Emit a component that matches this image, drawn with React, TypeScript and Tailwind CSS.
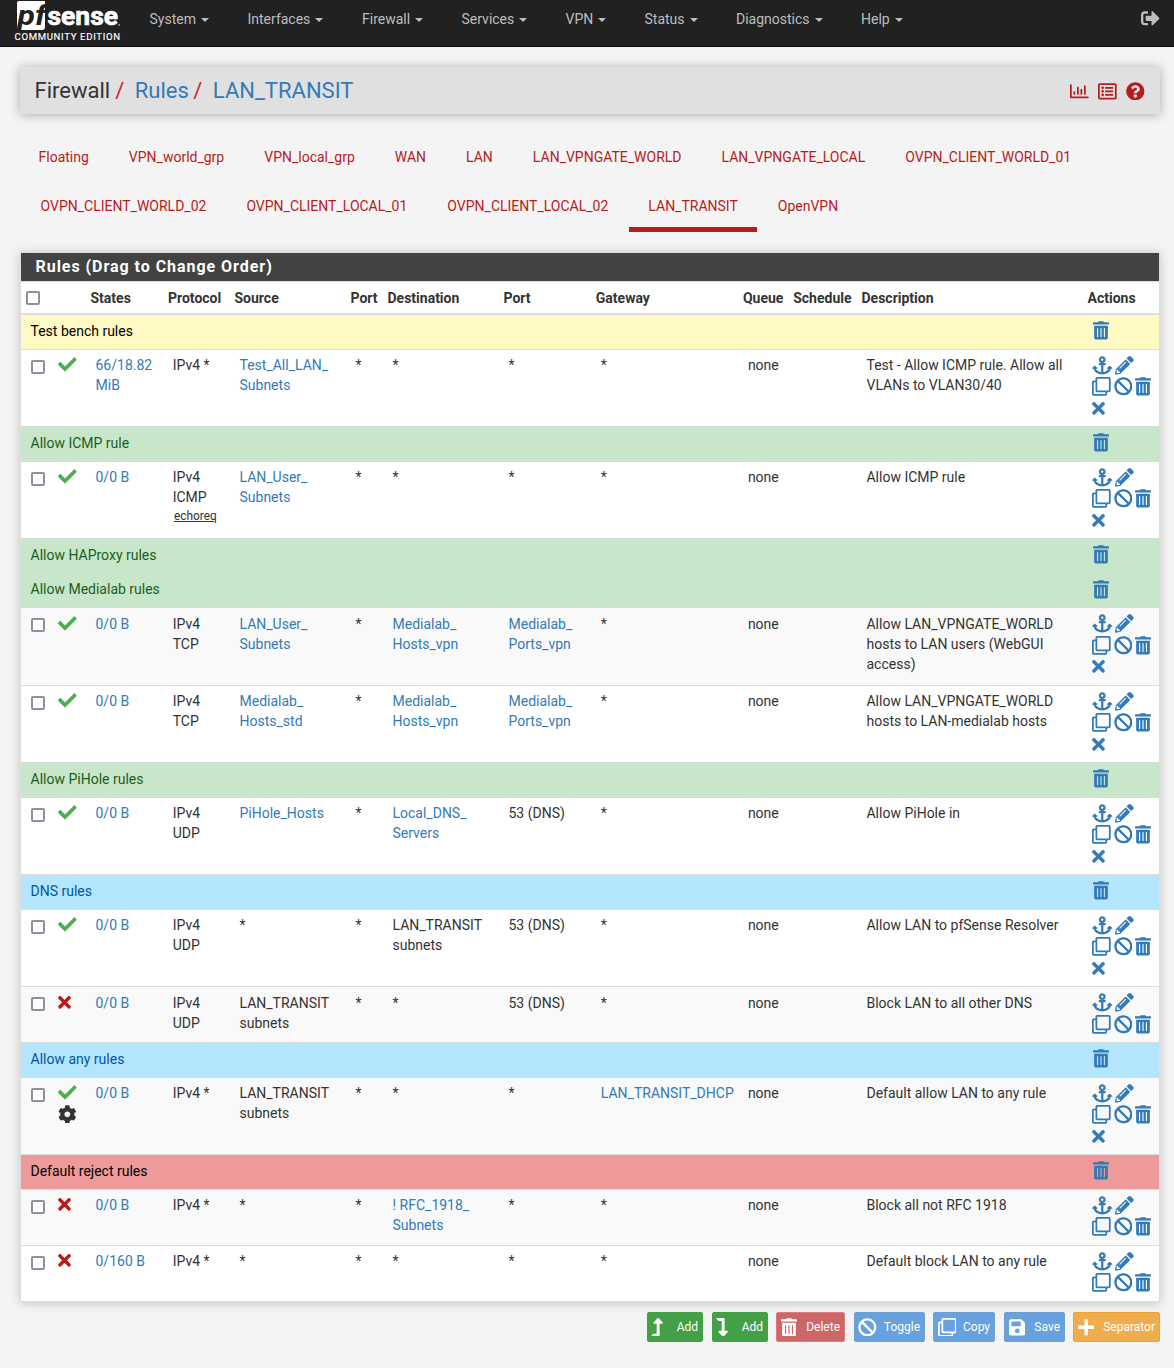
import React from "react";
import {
  FaAnchor,
  FaBan,
  FaCheck,
  FaCog,
  FaLevelDownAlt,
  FaLevelUpAlt,
  FaPencilAlt,
  FaPlus,
  FaQuestionCircle,
  FaRegChartBar,
  FaRegClone,
  FaRegListAlt,
  FaSave,
  FaSignOutAlt,
  FaTimes,
  FaTrashAlt,
} from "react-icons/fa";

const NAV = [
  { label: "System", w: "w-[98px]" },
  { label: "Interfaces", w: "w-[114.5px]" },
  { label: "Firewall", w: "w-[99.5px]" },
  { label: "Services", w: "w-[104px]" },
  { label: "VPN", w: "w-[79px]" },
  { label: "Status", w: "w-[91.5px]" },
  { label: "Diagnostics", w: "w-[125px]" },
  { label: "Help", w: "w-[60px]" },
];

const TABS_TOP = [
  "Floating",
  "VPN_world_grp",
  "VPN_local_grp",
  "WAN",
  "LAN",
  "LAN_VPNGATE_WORLD",
  "LAN_VPNGATE_LOCAL",
  "OVPN_CLIENT_WORLD_01",
];
const TABS_BOTTOM = [
  "OVPN_CLIENT_WORLD_02",
  "OVPN_CLIENT_LOCAL_01",
  "OVPN_CLIENT_LOCAL_02",
  "LAN_TRANSIT",
  "OpenVPN",
];

const COLS =
  "grid grid-cols-[32.5px_32px_77.5px_66.5px_116px_37px_116px_92.3px_147.1px_50.3px_68.3px_226px_1fr]";

type Cell = string | { link: string };
type Sep = { kind: "sep"; text: string; cls: string; size: string; iconCls?: string };
type Rule = {
  kind: "rule";
  size: string;
  raised?: boolean;
  block?: boolean;
  gear?: boolean;
  states: string;
  proto: string;
  icmp?: string;
  src: Cell;
  dst: Cell;
  dport: Cell;
  gw?: Cell;
  desc: string;
};

const YELLOW = "bg-[#fff9c4] text-black";
const GREEN = "bg-[#c8e6c9] text-[#1b5e20]";
const BLUE = "bg-[#b3e5fc] text-[#01579b]";
const RED = "bg-[#ef9a9a] text-black";

const ROWS: (Sep | Rule)[] = [
  { kind: "sep", text: "Test bench rules", cls: YELLOW, size: "h-[34px] pt-[6px]" },
  { kind: "rule", size: "h-[77px] pt-[5px] border-t", states: "66/18.82\nMiB", proto: "IPv4 *", src: { link: "Test_All_LAN_\nSubnets" }, dst: "*", dport: "*", desc: "Test - Allow ICMP rule. Allow all\nVLANs to VLAN30/40" },
  { kind: "sep", text: "Allow ICMP rule", cls: GREEN, size: "h-[35px] pt-[6px] border-t" },
  { kind: "rule", size: "h-[77px] pt-[5px] border-t", states: "0/0 B", proto: "IPv4\nICMP", icmp: "echoreq", src: { link: "LAN_User_\nSubnets" }, dst: "*", dport: "*", desc: "Allow ICMP rule" },
  { kind: "sep", text: "Allow HAProxy rules", cls: GREEN, size: "h-[35px] pt-[6px] border-t" },
  { kind: "sep", text: "Allow Medialab rules", cls: GREEN, size: "h-[34px] pt-[5px] border-t", iconCls: "mt-px" },
  { kind: "rule", size: "h-[78px] pt-[6px] border-t bg-[#f9f9f9]", raised: true, states: "0/0 B", proto: "IPv4\nTCP", src: { link: "LAN_User_\nSubnets" }, dst: { link: "Medialab_\nHosts_vpn" }, dport: { link: "Medialab_\nPorts_vpn" }, desc: "Allow LAN_VPNGATE_WORLD\nhosts to LAN users (WebGUI\naccess)" },
  { kind: "rule", size: "h-[77px] pt-[5px] border-t", states: "0/0 B", proto: "IPv4\nTCP", src: { link: "Medialab_\nHosts_std" }, dst: { link: "Medialab_\nHosts_vpn" }, dport: { link: "Medialab_\nPorts_vpn" }, desc: "Allow LAN_VPNGATE_WORLD\nhosts to LAN-medialab hosts" },
  { kind: "sep", text: "Allow PiHole rules", cls: GREEN, size: "h-[35px] pt-[6px] border-t" },
  { kind: "rule", size: "h-[77px] pt-[5px] border-t", states: "0/0 B", proto: "IPv4\nUDP", src: { link: "PiHole_Hosts" }, dst: { link: "Local_DNS_\nServers" }, dport: "53 (DNS)", desc: "Allow PiHole in" },
  { kind: "sep", text: "DNS rules", cls: BLUE, size: "h-[35px] pt-[6px] border-t" },
  { kind: "rule", size: "h-[77px] pt-[5px] border-t", states: "0/0 B", proto: "IPv4\nUDP", src: "*", dst: "LAN_TRANSIT\nsubnets", dport: "53 (DNS)", desc: "Allow LAN to pfSense Resolver" },
  { kind: "rule", size: "h-[56px] pt-[6px] border-t bg-[#f9f9f9]", raised: true, block: true, states: "0/0 B", proto: "IPv4\nUDP", src: "LAN_TRANSIT\nsubnets", dst: "*", dport: "53 (DNS)", desc: "Block LAN to all other DNS" },
  { kind: "sep", text: "Allow any rules", cls: BLUE, size: "h-[35px] pt-[6px] border-t" },
  { kind: "rule", size: "h-[77px] pt-[5px] border-t bg-[#f9f9f9]", gear: true, states: "0/0 B", proto: "IPv4 *", src: "LAN_TRANSIT\nsubnets", dst: "*", dport: "*", gw: { link: "LAN_TRANSIT_DHCP" }, desc: "Default allow LAN to any rule" },
  { kind: "sep", text: "Default reject rules", cls: RED, size: "h-[35px] pt-[6px] border-t" },
  { kind: "rule", size: "h-[56px] pt-[5px] border-t bg-[#f9f9f9]", block: true, states: "0/0 B", proto: "IPv4 *", src: "*", dst: { link: "! RFC_1918_\nSubnets" }, dport: "*", desc: "Block all not RFC 1918" },
  { kind: "rule", size: "h-[56px] pt-[5px] border-t", block: true, states: "0/160 B", proto: "IPv4 *", src: "*", dst: "*", dport: "*", desc: "Default block LAN to any rule" },
];

function Checkbox({ className }: { className: string }) {
  return <span className={`block size-[14px] rounded-[2px] border-2 border-[#8f8f9d] bg-white ${className}`} />;
}

function Text({ value }: { value: Cell }) {
  return (
    <div className="pl-[10px] whitespace-pre">
      {typeof value === "string" ? value : <a className="text-[#337ab7]">{value.link}</a>}
    </div>
  );
}

function Actions({ block, raised }: { block?: boolean; raised?: boolean }) {
  return (
    <div className={`pl-[9.8px] text-[18.66px] text-[#337ab7] ${raised ? "" : "pt-px"}`}>
      <div className={`flex gap-[2.5px] ${raised ? "h-[22px]" : "h-[21px]"}`}>
        <FaAnchor className="w-[20.5px]" />
        <FaPencilAlt />
      </div>
      <div className="flex h-[21px] gap-[2.6px]">
        <FaRegClone />
        <FaBan />
        <FaTrashAlt className="w-[16px]" />
      </div>
      {!block && <FaTimes className={`w-[13px] ${raised ? "" : "mt-px"}`} />}
    </div>
  );
}

function RuleRow({ r }: { r: Rule }) {
  return (
    <div className={`${COLS} border-[#ddd] ${r.size}`}>
      <Checkbox className={r.raised ? "mt-[4px] ml-[10px]" : "mt-[5px] ml-[10px]"} />
      <div className="pl-[4.5px] text-[18.66px]">
        {r.block ? <FaTimes className="w-[13px] text-[#b71c1c]" /> : <FaCheck className="text-[#4caf50]" />}
        {r.gear && <FaCog className="mt-[3px] text-[#333]" />}
      </div>
      <Text value={{ link: r.states }} />
      <div className="pl-[9.7px] whitespace-pre">
        {r.proto}
        {r.icmp && <div className="-mt-px pl-[1.3px] text-[11.9px] leading-5 underline">{r.icmp}</div>}
      </div>
      <Text value={r.src} />
      <Text value="*" />
      <Text value={r.dst} />
      <Text value={r.dport} />
      <Text value={r.gw ?? "*"} />
      <Text value="none" />
      <div />
      <Text value={r.desc} />
      <Actions block={r.block} raised={r.raised} />
    </div>
  );
}

function SepRow({ r }: { r: Sep }) {
  return (
    <div className={`flex border-[#ddd] ${r.size} ${r.cls}`}>
      <div className="w-[1062px] pl-[9.5px]">{r.text}</div>
      <FaTrashAlt className={`ml-[9.5px] w-[16px] text-[18.66px] text-[#337ab7] ${r.iconCls ?? ""}`} />
    </div>
  );
}

const HEADS = ["States", "Protocol", "Source", "Port", "Destination", "Port", "Gateway", "Queue", "Schedule", "Description", "Actions"];

const ADD = "bg-[#43a047] border-[#43a047]";
const INFO = "bg-[#67a1de] border-[#6f9fcf]";
const BUTTONS = [
  { label: "Add", icon: FaLevelUpAlt, cls: ADD, w: "w-[56px] mr-[9px] pl-[3px]", iw: "w-[12px]" },
  { label: "Add", icon: FaLevelDownAlt, cls: ADD, w: "w-[56px] mr-[8px] pl-[3px]", iw: "w-[12px]" },
  { label: "Delete", icon: FaTrashAlt, cls: "bg-[#cd6767] border-[#dc7b7b]", w: "w-[69px] mr-[9px] pl-[4px]", iw: "w-[16px]" },
  { label: "Toggle", icon: FaBan, cls: INFO, w: "w-[71px] mr-[8px] pl-[3px]", iw: "w-[18.66px]" },
  { label: "Copy", icon: FaRegClone, cls: INFO, w: "w-[62px] mr-[9px] pl-[3.5px]", iw: "w-[18.66px]" },
  { label: "Save", icon: FaSave, cls: INFO, w: "w-[61px] mr-[8px] pl-[3.5px]", iw: "w-[16.5px]" },
  { label: "Separator", icon: FaPlus, cls: "bg-[#f0ad4e] border-[#eea236]", w: "w-[87px] pl-[3.5px]", iw: "w-[16.5px]" },
];

function Logo() {
  return (
    <svg width="108" height="44" viewBox="0 0 108 44" className="block" fontFamily="Roboto">
      <path d="M31 10H31V27Q31 30 28 30H3V3Q3 1 5 1H31Z" fill="#fff" />
      <text x="3.5" y="25" fontSize="27" fontWeight="700" fontStyle="italic" fill="#212121" textLength="28.5" lengthAdjust="spacingAndGlyphs">pf</text>
      <text x="33.5" y="25" fontSize="26.5" fontWeight="700" fill="#fff" stroke="#fff" strokeWidth="0.7" textLength="70.5" lengthAdjust="spacingAndGlyphs">sense</text>
      <circle cx="105" cy="25" r="0.9" fill="#aaa" />
      <text x="0.5" y="40" fontSize="9.6" fontWeight="400" fill="#fff" stroke="#fff" strokeWidth="0.15" textLength="105.5">COMMUNITY EDITION</text>
    </svg>
  );
}

export default function App() {
  return (
    <div className="min-h-[1368px] bg-[#f4f4f4] font-[Roboto,sans-serif] text-sm leading-5 text-[#333]">
      <nav className="flex h-[47px] border-b border-[#080808] bg-[#212121] pl-[14px] text-[#bdbdbd]">
        <div className="w-[135.5px]"><Logo /></div>
        {NAV.map((n) => (
          <div key={n.label} className={`flex items-start pt-[9px] whitespace-nowrap ${n.w}`}>
            {n.label}
            <span className="mt-[9px] ml-[5px] border-x-4 border-t-4 border-x-transparent border-t-[#bdbdbd]" />
          </div>
        ))}
        <FaSignOutAlt className="mt-[9px] mr-[14px] ml-auto text-[18.66px]" />
      </nav>

      <header className="mr-[14px] ml-5 mt-5 flex h-[47px] items-center bg-[#e0e0e0] pl-[14.5px] pr-[15px] text-[22px] shadow-[0_1px_10px_rgba(0,0,0,0.3)]">
        <span>Firewall</span>
        <span className="ml-[5px] text-[#c62828]">/</span>
        <a className="ml-[10.5px] text-[#337ab7]">Rules</a>
        <span className="ml-[4.5px] text-[#c62828]">/</span>
        <a className="ml-[10.5px] text-[#337ab7]">LAN_TRANSIT</a>
        <div className="ml-auto flex items-center gap-[9.5px] pt-px text-[18.66px] text-[#b71c1c]">
          <FaRegChartBar />
          <FaRegListAlt />
          <FaQuestionCircle />
        </div>
      </header>

      <div className="mt-[19px] ml-[18.5px] text-[#b71c1c]">
        <div className="flex h-[49px]">
          {TABS_TOP.map((t) => (
            <a key={t} className="px-5 pt-[14px] whitespace-nowrap">{t}</a>
          ))}
        </div>
        <div className="ml-[2px] flex h-[50px]">
          {TABS_BOTTOM.map((t) => (
            <a
              key={t}
              className={`pt-[14px] whitespace-nowrap ${t === "LAN_TRANSIT" ? "mx-[0.8px] border-b-[5px] border-[#b71c1c] px-[19.2px]" : "px-5"}`}
            >
              {t}
            </a>
          ))}
        </div>
      </div>

      <section className="mr-[14px] ml-5 mt-5 border border-[#ddd] bg-white shadow-[0_1px_10px_rgba(0,0,0,0.2)]">
        <h2 className="h-[28px] bg-[#424242] pt-[4px] pl-[14.5px] text-base leading-5 font-bold tracking-[0.96px] text-white">
          Rules (Drag to Change Order)
        </h2>
        <div className={`${COLS} h-[34px] border-t border-b-2 border-[#ddd] pt-[6px] font-bold`}>
          <Checkbox className="mt-[3px] ml-[5px]" />
          <div />
          {HEADS.map((h, i) => (
            <div key={i} className="pl-[5px] whitespace-nowrap">{h}</div>
          ))}
        </div>
        {ROWS.map((r, i) => (r.kind === "sep" ? <SepRow key={i} r={r} /> : <RuleRow key={i} r={r} />))}
      </section>

      <div className="mt-[10px] flex justify-end pr-[14px]">
        {BUTTONS.map((b, i) => (
          <button
            key={i}
            className={`flex h-[30px] items-center justify-between rounded-[2px] border pr-[4px] text-xs text-white ${b.cls} ${b.w}`}
          >
            <b.icon className={`text-[18.66px] ${b.iw}`} />
            <span>{b.label}</span>
          </button>
        ))}
      </div>
    </div>
  );
}
